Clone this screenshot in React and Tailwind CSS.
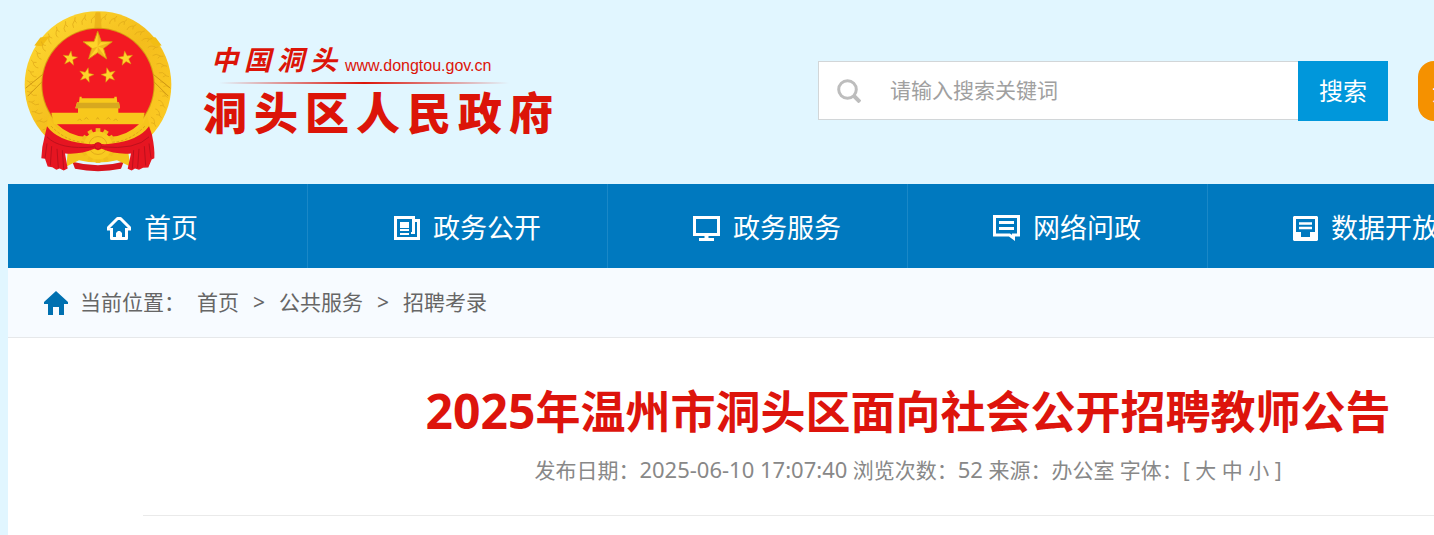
import React, { useState } from "react";

const STAR =
  "M0 -10 L2.4 -3.2 L9.5 -3.1 L3.8 1.2 L5.9 8.1 L0 4 L-5.9 8.1 L-3.8 1.2 L-9.5 -3.1 L-2.4 -3.2 Z";

function Emblem() {
  const teeth = Array.from({ length: 12 }, (_, i) => i * 30);
  const grains = Array.from({ length: 34 }, (_, i) => -230 + i * 8.5);
  return (
    <svg viewBox="40 30 450 485" className="h-[162px] w-[150px] shrink-0" role="img" aria-label="国徽">
      <defs>
        <linearGradient id="gold" x1="0" y1="0" x2="1" y2="1">
          <stop offset="0" stopColor="#ffdc35" />
          <stop offset="0.5" stopColor="#f4bd1c" />
          <stop offset="1" stopColor="#ffcf26" />
        </linearGradient>
      </defs>
      {/* wheat ring */}
      <ellipse cx="265" cy="254" rx="220" ry="221" fill="url(#gold)" />
      <path d="M74 136 L92 112 L120 108 L96 138 Z M456 136 L438 112 L410 108 L434 138 Z" fill="#f2bd14" />
      {grains.map((a) => (
        <path
          key={a}
          d="M186 -7 Q198 -10 206 4 M196 7 Q204 1 214 9"
          transform={`translate(265 254) rotate(${a})`}
          fill="none"
          stroke="#dfa818"
          strokeWidth="2"
        />
      ))}
      <path d="M48 264 L100 222 M54 288 L102 240 M482 264 L430 222 M476 288 L428 240" stroke="#cf9814" strokeWidth="3" />
      <path d="M258 36 H272 L276 84 H254 Z" fill="#ecb41a" />
      <circle cx="265" cy="253" r="170" fill="#d79c12" />
      <circle cx="265" cy="253" r="167" fill="#f31a22" />
      {/* stars */}
      <g fill="#ffd42a" stroke="#d6930d" strokeWidth="0.6">
        <path d={STAR} transform="translate(264 139) scale(4.6)" />
        <path d={STAR} transform="translate(181 175) rotate(8) scale(2.3)" />
        <path d={STAR} transform="translate(348 175) rotate(-8) scale(2.3)" />
        <path d={STAR} transform="translate(230 225) rotate(14) scale(2.3)" />
        <path d={STAR} transform="translate(297 225) rotate(-14) scale(2.3)" />
      </g>
      <path d="M264 93 V139 L275 124 Z M264 139 L308 125 L281 145 Z M264 139 L291 176 L264 158 Z M264 139 L237 176 L247 145 Z" fill="#e6a717" opacity="0.6" />
      {/* gate */}
      <path d="M210 290 H216 V294 H314 V290 H321 L323 306 H328 L331 324 H326 V338 H405 L397 372 H133 L125 338 H205 V324 H197 L202 306 H208 Z" fill="#f8c81c" />
      <path d="M202 308 H328 L331 324 H197 Z" fill="#d7a81f" />
      <path d="M204 362 l6 -6 6 6 M224 358 l6 -6 6 6 M260 358 l4 -6 4 6 M290 358 l6 -6 6 6 M312 362 l6 -6 6 6" stroke="#d39a18" strokeWidth="2" fill="none" />
      {/* lower wheat */}
      <path d="M118 346 Q128 378 160 396 L142 372 H388 L370 396 Q402 378 412 346 L424 392 Q360 446 265 452 Q170 446 106 392 Z" fill="#f7c51c" />
      <path d="M142 372 H388 Q352 406 303 410 L265 396 L227 410 Q178 406 142 372 Z" fill="#ee1822" />
      <path d="M124 378 Q170 424 222 426 M406 378 Q360 424 308 426" fill="none" stroke="#dba319" strokeWidth="3" strokeDasharray="8 5" />
      {/* bottom sheaf */}
      <path d="M188 485 Q265 506 342 485 L334 506 Q265 520 196 506 Z" fill="#d8131e" />
      <path d="M174 456 H356 L362 499 L322 480 Q265 494 208 480 L170 499 Z" fill="#f5c41c" />
      {/* gear */}
      {teeth.map((a) => (
        <rect key={a} x="258" y="384" width="14" height="16" fill="#f1bd1b" transform={`rotate(${a} 265 436)`} />
      ))}
      <circle cx="265" cy="436" r="42" fill="#f9ca20" />
      <circle cx="265" cy="436" r="27" fill="none" stroke="#e3ac19" strokeWidth="3" />
      {/* ribbon */}
      <path
        d="M112 378 Q142 420 222 430 Q250 434 258 430 H272 Q280 434 308 430 Q388 420 418 378 L427 404 Q436 448 434 474 L426 478 L416 502 L400 503 L388 509 L376 505 L366 511 L354 506 L364 460 Q318 464 276 446 L265 450 L254 446 Q212 464 166 460 L174 505 L162 511 L150 505 L140 509 L128 501 L114 499 L106 476 L95 474 Q96 440 106 404 Z"
        fill="#e61521"
      />
      <path
        d="M112 410 Q150 450 254 440 M418 410 Q380 450 276 440 M112 430 L106 474 M126 438 L122 496 M142 446 L146 503 M158 450 L162 506 M418 430 L424 474 M404 438 L408 496 M388 446 L384 503 M372 450 L368 506"
        fill="none"
        stroke="#bd101c"
        strokeWidth="3"
      />
      <circle cx="265" cy="437" r="10" fill="#e61521" stroke="#b7101b" strokeWidth="2" />
    </svg>
  );
}

function HomeIcon() {
  return (
    <svg viewBox="0 0 24 25" className="h-[25px] w-[24px]" fill="none" stroke="#fff" strokeWidth="3" strokeLinejoin="round">
      <path d="M4.500 12 V22.500 H19.500 V12" />
      <path d="M9 24 V17 L11 15 H13 L15 17 V24 Z" fill="#fff" stroke="none" />
      <path d="M1.500 14.500 V11.500 L10.500 2.500 H13.500 L22.500 11.500 V14.500" />
    </svg>
  );
}

function NewsIcon() {
  return (
    <svg viewBox="0 0 26 24" className="h-[24px] w-[26px]" fill="none" stroke="#fff" strokeWidth="2">
      <path d="M1.500 1.500 H19.500 V17 M1.500 0 V22.500 H24.500 V4.500 H19.500" strokeWidth="3" />
      <path d="M17 17 H21 M6 14 H15 M6 18 H15" />
      <path d="M6 6 H15 V12 H6 Z" fill="#fff" stroke="none" />
    </svg>
  );
}

function ScreenIcon() {
  return (
    <svg viewBox="0 0 27 25" className="h-[25px] w-[27px]" fill="none" stroke="#fff">
      <path d="M1.500 1.500 H25.500 V18.500 H1.500 Z" strokeWidth="3" />
      <path d="M13.500 19 V23" strokeWidth="4" />
      <path d="M6 23.500 H21" strokeWidth="3" />
    </svg>
  );
}

function ChatIcon() {
  return (
    <svg viewBox="0 0 27 26" className="h-[26px] w-[27px]" fill="none" stroke="#fff" strokeWidth="3">
      <path d="M1.500 1.500 H25.500 V20 H20.500 V23 L16.500 20 H1.500 Z" />
      <path d="M6 7.500 H21 M6 13.500 H21" strokeWidth="3" />
    </svg>
  );
}

function DataIcon() {
  return (
    <svg viewBox="0 0 25 25" className="h-[25px] w-[25px]">
      <path
        fill="#fff"
        fillRule="evenodd"
        d="M1 0 H24 L25 1 V24 L24 25 H1 L0 24 V1 Z M3 3 V16 H8 V21 H17 V16 H22 V3 Z"
      />
      <path d="M6 7.500 H19 M6 12 H19" stroke="#fff" strokeWidth="2.500" />
    </svg>
  );
}

const navItems = [
  { label: "首页", icon: HomeIcon, pad: "pl-[99px]" },
  { label: "政务公开", icon: NewsIcon, pad: "pl-[86px]" },
  { label: "政务服务", icon: ScreenIcon, pad: "pl-[85px]" },
  { label: "网络问政", icon: ChatIcon, pad: "pl-[85px]" },
  { label: "数据开放", icon: DataIcon, pad: "pl-[85px]" },
  { label: "", icon: null, pad: "" },
];

function App() {
  const [keyword, setKeyword] = useState("");
  return (
    <div className="min-h-screen overflow-hidden bg-[#e1f6ff] pl-2 font-['Noto_Sans','Noto_Sans_CJK_SC',sans-serif]">
      <div className="min-w-[1800px]">
        <header className="flex h-[184px] items-start">
          <div className="flex w-[810px] shrink-0 pl-[15px] pt-[10px]">
            <Emblem />
            <div className="ml-[30px] mt-8 w-[350px] text-[#dc1408]">
              <div className="flex items-center pl-2">
                <div className="flex w-[126px] justify-between text-[27px] leading-[36px] font-bold italic">
                  {"中国洞头".split("").map((c) => (
                    <span key={c}>{c}</span>
                  ))}
                </div>
                <span className="ml-2 mt-3 font-['Liberation_Sans',sans-serif] text-base leading-5">
                  www.dongtou.gov.cn
                </span>
              </div>
              <div className="mt-1 ml-4 h-[2px] w-[290px] bg-linear-to-r from-transparent via-[#dc1408] to-transparent" />
              <div className="flex justify-between text-[44px] leading-[58px] font-black">
                {"洞头区人民政府".split("").map((c) => (
                  <span key={c}>{c}</span>
                ))}
              </div>
            </div>
          </div>
          <form className="mt-[61px] flex h-[60px]" onSubmit={(e) => e.preventDefault()}>
            <label className="flex h-[59px] w-[480px] items-center border border-r-0 border-[#d2d6d8] bg-white pl-[18px]">
              <svg viewBox="0 0 24 24" className="h-6 w-6 shrink-0" fill="none" stroke="#bdbdbd" strokeWidth="3">
                <circle cx="10.500" cy="10.500" r="8.800" />
                <path d="M16.500 16.500 L23 23" strokeWidth="4" />
              </svg>
              <input
                type="text"
                aria-label="搜索"
                className="ml-[29px] min-w-0 flex-1 bg-transparent text-[21px] outline-none placeholder:text-[#a0a0a0]"
                placeholder="请输入搜索关键词"
                value={keyword}
                onChange={(e) => setKeyword(e.target.value)}
              />
            </label>
            <button className="w-[90px] bg-[#0097db] text-2xl text-white">搜索</button>
          </form>
          <button className="mt-[61px] ml-[30px] h-[60px] w-[150px] rounded-2xl bg-[#f59100] pl-[14px] text-left text-2xl text-white">
            无障碍
          </button>
        </header>

        <nav className="flex h-[84px] bg-[#0079bf]">
          {navItems.map(({ label, icon: Icon, pad }, i) => (
            <a
              key={i}
              href="#"
              className={`flex w-1/6 items-center gap-[13px] border-r border-[#1a88c7] pt-1 text-[27px] text-white ${pad}`}
            >
              {Icon && (
                <span className="flex shrink-0">
                  <Icon />
                </span>
              )}
              {label}
            </a>
          ))}
        </nav>

        <main className="min-h-[267px] bg-white">
          <div className="flex h-[70px] items-center border-b border-[#e6e8ea] bg-[#f7fbff] pt-px pl-9 text-[21px] text-[#666]">
            <svg viewBox="0 0 24 24" className="h-6 w-6 shrink-0" fill="#0070b0">
              <path d="M12 0 L24 11 V13 H20 V24 H15 V16 H9 V24 H4 V13 H0 V11 Z" />
            </svg>
            <span className="ml-3">当前位置：</span>
            <div className="ml-3 flex items-center gap-[14px]">
              <a href="#">首页</a>
              <span>&gt;</span>
              <a href="#">公共服务</a>
              <span>&gt;</span>
              <a href="#">招聘考录</a>
            </div>
          </div>

          <div className="mx-[135px] border-b border-[#eaeaea] pt-[43px] pb-[30px] text-center">
            <h1 className="text-[45px] leading-[60px] font-bold text-[#dd140c]">
              <span className="text-[48px]">2025</span>年温州市洞头区面向社会公开招聘教师公告
            </h1>
            <p className="mt-3 text-[21px] leading-[30px] text-[#888]">
              发布日期：<span className="text-[22px]">2025-06-10 17:07:40</span> 浏览次数：
              <span className="text-[22px]">52</span> 来源：办公室 字体：[ <a href="#">大</a> <a href="#">中</a>{" "}
              <a href="#">小</a> ]
            </p>
          </div>
        </main>
      </div>
    </div>
  );
}

export default App;
